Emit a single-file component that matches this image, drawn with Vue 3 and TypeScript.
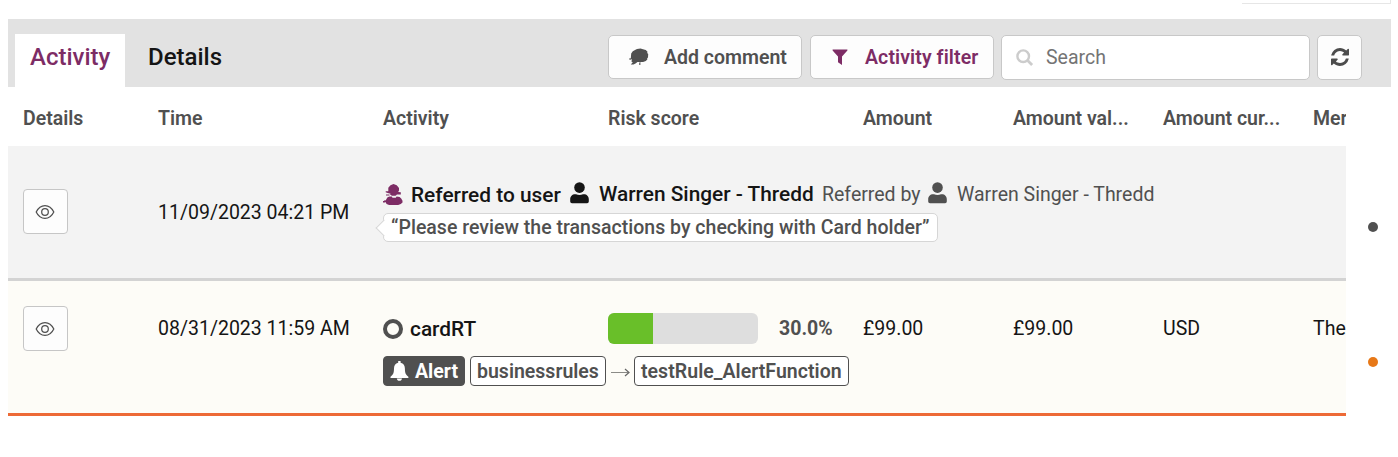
<script setup lang="ts">
interface Column { label: string; key: string }

const columns: Column[] = [
  { label: 'Details', key: 'details' },
  { label: 'Time', key: 'time' },
  { label: 'Activity', key: 'activity' },
  { label: 'Risk score', key: 'risk' },
  { label: 'Amount', key: 'amount' },
  { label: 'Amount val...', key: 'value' },
  { label: 'Amount cur...', key: 'currency' },
  { label: 'Mer', key: 'merchant' },
]
const risk = 30
</script>

<template>
  <div class="page">
    <div class="upper-panel"></div>
    <header class="toolbar">
      <nav class="tabs">
        <a class="tab active">Activity</a>
        <a class="tab">Details</a>
      </nav>
      <div class="tools">
        <button class="btn comment">
          <svg width="20" height="18" viewBox="0 0 20 18">
            <path fill="#505050" d="M2.200 5.500 3.800 3.200 6.500 1.700 8 .9 11.500.5l2.500.7 2.800.9 1.700 1.600-.3 1.300 1 1-.2 3.400-.8.8.1 1.400-1.500 1.300-2.700 1-2.400.2v.4h-1.500v-.4l-1.700-.2-2 1.700-2 .9H1.800l2-2.300-1.300-.4.300-2-1-1.200z" />
            <path fill="#505050" d="M.4 10.300h1.500v1.500H.4zM10 15.300h1.500v1.500H10z" />
          </svg>
          <span>Add comment</span>
        </button>
        <button class="btn filter">
          <svg width="16" height="16" viewBox="0 0 16 16"><path fill="#7d2c65" d="M.6.5h14.800v1.100L10 7.500V16L6 13.200V7.500L.6 1.600z" /></svg>
          <span>Activity filter</span>
        </button>
        <label class="search">
          <svg width="18" height="18" viewBox="0 0 18 18" fill="none" stroke="#ccc"><circle cx="7.200" cy="7.200" r="5.800" stroke-width="2.400" /><path d="m11.600 11.600 4.500 4.500" stroke-width="2.800" /></svg>
          <span>Search</span>
        </label>
        <button class="btn refresh">
          <svg width="18" height="18" viewBox="0 0 1536 1536"><path fill="#4c4c4c" d="M1511 928q0 5-1 7-64 268-268 434.500T764 1536q-146 0-282.500-55T238 1324l-129 129q-19 19-45 19t-45-19-19-45V960q0-26 19-45t45-19h448q26 0 45 19t19 45-19 45l-137 137q71 66 161 102t187 36q134 0 250-65t186-179q11-17 53-117 8-23 30-23h192q13 0 22.500 9.500t9.500 22.500zm25-800v448q0 26-19 45t-45 19h-448q-26 0-45-19t-19-45 19-45l138-138Q969 256 768 256q-134 0-250 65T332 500q-11 17-53 117-8 23-30 23H50q-13 0-22.500-9.500T18 608v-7q65-268 270-434.500T768 0q146 0 284 55.500T1297 212l130-129q19-19 45-19t45 19 19 45z" /></svg>
        </button>
      </div>
    </header>

    <div class="body">
      <main class="table">
        <div class="grid head">
          <span v-for="c in columns" :key="c.key" :class="c.key">{{ c.label }}</span>
        </div>

        <section class="grid row referral">
          <button class="eye">
            <svg width="20" height="16" viewBox="0 0 20 16" fill="none" stroke="#505050" stroke-width="1.250"><path d="M1.200 8C3.200 3.900 6.300 1.600 10 1.600S16.800 3.900 18.800 8C16.800 12.100 13.700 14.400 10 14.400S3.200 12.100 1.200 8z" /><circle cx="10" cy="8" r="3.300" /></svg>
          </button>
          <span class="time">11/09/2023 04:21 PM</span>
          <div class="event">
            <div class="event-line">
              <svg class="agent" width="20" height="21" viewBox="0 0 20 21" fill="#7d2c65"><path d="M5.300 6V3.800L7.500 1.200 10.500 0l3.200 1.200L16 4v2.600l-.8 1.400 2.600.3v2.200H14l-1.500 1.300H9L7 10.600l.6-.8L4.700 9l-2-.7v-1h2.600z" /><path d="m3.300 15.200 1.300-2 1.900-.7 2.300.1.700 1.200h3.300l.8-1.400 3 .6 1.600 1.500 1.300 2.300v1.700L17.800 20l-2.600.9H6.100L3.600 19.900l-1-1.700-1.600-.6v-1.200l1.900-.1z" /><path d="M3 10.400h3.500v1H3zM0 17h2v1.400H0z" /></svg>
              <span class="strong referred">Referred to user</span>
              <svg class="person first" width="19" height="22" viewBox="0 0 19 22" fill="#151515"><circle cx="9.500" cy="5.600" r="5.300" /><path d="M.2 19.500v-2.200c0-3 2-5.100 5-5.100h.8c2.200.9 4.800.9 7 0h.8c3 0 5 2.100 5 5.100v2.200q0 1.800-1.700 1.800H2q-1.800 0-1.800-1.800z" /></svg>
              <span class="strong warren">Warren Singer - Thredd</span>
              <span class="muted by">Referred by</span>
              <svg class="person second" width="19" height="22" viewBox="0 0 19 22" fill="#505050"><circle cx="9.500" cy="5.600" r="5.300" /><path d="M.2 19.500v-2.200c0-3 2-5.100 5-5.100h.8c2.200.9 4.800.9 7 0h.8c3 0 5 2.100 5 5.100v2.200q0 1.800-1.700 1.800H2q-1.800 0-1.800-1.800z" /></svg>
              <span class="muted">Warren Singer - Thredd</span>
            </div>
            <div class="quote">“Please review the transactions by checking with Card holder”</div>
          </div>
        </section>

        <section class="grid row alert">
          <button class="eye">
            <svg width="20" height="16" viewBox="0 0 20 16" fill="none" stroke="#505050" stroke-width="1.250"><path d="M1.200 8C3.200 3.900 6.300 1.600 10 1.600S16.800 3.900 18.800 8C16.800 12.100 13.700 14.400 10 14.400S3.200 12.100 1.200 8z" /><circle cx="10" cy="8" r="3.300" /></svg>
          </button>
          <span class="time">08/31/2023 11:59 AM</span>
          <div class="card">
            <i class="ring"></i><span class="strong">cardRT</span>
          </div>
          <div class="score">
            <div class="track"><div class="fill" :style="{ width: risk + '%' }"></div></div>
            <b>{{ risk.toFixed(1) }}%</b>
          </div>
          <span>£99.00</span>
          <span>£99.00</span>
          <span>USD</span>
          <span>The</span>
          <div class="rules">
            <span class="tag dark">
              <svg width="19" height="20" viewBox="0 0 19 20"><path fill="#fff" d="M8.200 0h2.400v1.700c3 .6 4.300 3 4.300 5.700 0 4.500 1 6.500 3.500 8.300v1.200H.5v-1.200C3 13.900 4 11.900 4 7.400c0-2.700 1.300-5.100 4.200-5.700zM6.800 17.500H12c-.2 1.500-1.200 2.300-2.600 2.300s-2.400-.8-2.600-2.300z" /></svg>
              <span>Alert</span>
            </span>
            <span class="tag business">businessrules</span>
            <svg class="arrow" width="19" height="10" viewBox="0 0 19 10" fill="none"><path d="M0 4.500h17.500" stroke="#8b8b87" stroke-width="1" /><path d="m14 1 4 3.500L14 8" stroke="#666" stroke-width="1.200" /></svg>
            <span class="tag rule">testRule_AlertFunction</span>
          </div>
        </section>
      </main>
      <aside class="timeline">
        <i class="dot gray"></i>
        <i class="dot orange"></i>
      </aside>
    </div>
  </div>
</template>

<style>
html, body { margin: 0; background: #fff; overflow: hidden; }
</style>

<style scoped>
* { box-sizing: border-box; }
.page { width: 1398px; height: 457px; font: 400 19.500px/24px Roboto, sans-serif; color: #151515; padding-left: 8px; }
.upper-panel { width: 149px; height: 4px; margin-left: 1234px; border-right: 1px solid #e6e6e6; border-bottom: 1px solid #e6e6e6; }
.toolbar { display: flex; width: 1383px; height: 68px; margin-top: 15px; background: #e2e2e2; justify-content: space-between; }
.tabs { display: flex; padding: 15px 0 0 7px; }
.tab { height: 53px; line-height: 46px; padding: 0 15px; font-size: 24px; font-weight: 480; width: 110px; white-space: nowrap; }
.tab + .tab { padding-left: 23px; }
.tab.active { background: #fff; color: #7d2c65; }
.tools { display: flex; align-items: flex-start; padding: 16px 29px 0 0; }
.btn, .search { font: 600 19.500px/24px Roboto, sans-serif; color: #505050; background: #fdfdfd; border: 1px solid #c8c8c8; border-radius: 5px; height: 44px; padding: 0; display: flex; align-items: center; white-space: nowrap; }
.btn span { padding-top: 2px; }
.comment { width: 194px; padding-left: 20px; gap: 15px; margin-right: 8px; }
.filter { width: 184px; padding-left: 21px; gap: 17px; margin-right: 7px; color: #7d2c65; letter-spacing: .1px; }
.search { width: 309px; height: 45px; padding-left: 15px; gap: 11px; margin-right: 7px; font-weight: 400; color: #747474; background: #fff; }
.search svg { margin-left: -1px; }
.search span { margin-left: 1px; }
.refresh { width: 45px; height: 45px; justify-content: center; }
.refresh svg { margin-bottom: 1px; }
.body { display: flex; }
.table { width: 1338px; overflow: hidden; }
.grid { display: grid; grid-template-columns: 135px 225px 225px 255px 150px 150px 150px 48px; padding-left: 15px; white-space: nowrap; }
.head { height: 59px; padding-top: 5px; align-items: center; font-weight: 600; color: #505050; }
.row { height: 135px; border-bottom: 3px solid #d3d3d3; }
.referral { background: #f3f3f3; align-items: center; }
.eye { width: 45px; height: 45px; padding: 0 1px 0 0; display: flex; align-items: center; justify-content: center; border: 1px solid #c6c6c6; border-radius: 4px; background: #fdfdfd; }
.referral .eye { margin-top: -1px; }
.referral .time { padding-top: 2px; }
.event { grid-column: 3 / 9; padding-bottom: 2px; }
.event-line { display: flex; align-items: center; height: 30px; }
.agent { margin: -2px 8px 0 0; }
.strong { font-weight: 480; font-size: 20.850px; }
.referred { width: 158px; margin-top: -1px; }
.warren { width: 223px; margin-top: -2px; }
.muted { color: #505050; }
.by { width: 105px; }
.person { margin: -5px 10px 0 1px; }
.quote { position: relative; display: block; width: 555px; height: 29px; line-height: 27px; margin: 3px 0 0; padding-left: 7px; background: #fff; border: 1px solid #d6d6d6; border-radius: 5px; font-weight: 510; letter-spacing: .015px; color: #505050; }
.quote::before { content: ''; position: absolute; left: -6px; top: 8px; width: 11px; height: 11px; background: #fff; border-left: 1px solid #d6d6d6; border-bottom: 1px solid #d6d6d6; transform: rotate(45deg); }
.alert { background: #fdfcf7; border-bottom-color: #ed6a36; grid-template-rows: 45px 30px; row-gap: 5px; padding-top: 25px; align-items: center; }
.card { display: flex; align-items: center; gap: 8px; }
.card .strong { padding-top: 1px; }
.ring { width: 20px; height: 20px; margin-right: -1px; border: 4px solid #505050; border-radius: 50%; }
.score { display: flex; align-items: center; gap: 21px; }
.track { width: 150px; height: 31px; border-radius: 6px; background: #dedede; overflow: hidden; }
.fill { height: 100%; background: #69bf29; }
.score b { font-weight: 700; color: #505050; }
.rules { grid-column: 3 / 9; display: flex; align-items: center; }
.tag { height: 30px; line-height: 29px; border: 1px solid #505050; border-radius: 4px; padding: 0 6px; font-weight: 600; color: #505050; background: #fff; }
.dark { display: flex; align-items: center; width: 82px; gap: 6px; background: #505050; color: #fff; margin-right: 5px; font-weight: 700; }
.business { width: 136px; }
.arrow { margin: 3px 4px 0 5px; }
.rule { width: 215px; letter-spacing: .04px; }
.timeline { width: 52px; padding: 135px 0 0 22px; }
.dot { display: block; width: 10px; height: 10px; border-radius: 50%; }
.gray { background: #505050; margin-bottom: 125px; }
.orange { background: #e77817; }
</style>
